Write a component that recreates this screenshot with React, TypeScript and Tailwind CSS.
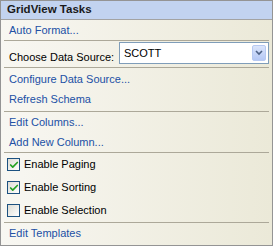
import { Check } from 'lucide-react';

const font = { fontFamily: '"Liberation Sans", Arial, sans-serif' };

function Sep() {
  return <div className="mx-[3px] h-px bg-[#aca899]" />;
}

function Link({ label, h = 'h-[20px]' }: { label: string; h?: string }) {
  return (
    <div className={`flex ${h} items-center pl-[8px] text-[11px] text-[#2150a5]`}>
      <span className="cursor-pointer hover:underline">{label}</span>
    </div>
  );
}

function CheckRow({ label, checked }: { label: string; checked: boolean }) {
  return (
    <div className="flex h-[23px] items-center gap-[4px] pl-[6px] text-[11px] text-black">
      <span className="flex h-[13px] w-[13px] items-center justify-center border border-[#1c5180] bg-gradient-to-br from-[#dcdcd5] to-white">
        {checked && <Check className="h-[10px] w-[10px] text-[#21a121]" strokeWidth={4} />}
      </span>
      <span>{label}</span>
    </div>
  );
}

export default function App() {
  return (
    <div
      className="flex h-[246px] w-[273px] flex-col border border-[#949494] bg-gradient-to-r from-[#f8f7f2] to-[#ebe9d8]"
      style={font}
    >
      <div className="flex h-[19px] shrink-0 items-center border-b border-[#a3a3a3] bg-[#c2d3f0] pl-[6px] text-[11.5px] font-bold text-[#1a1a1a]">
        GridView Tasks
      </div>

      <Link label="Auto Format..." />
      <Sep />

      <div className="flex h-[26px] items-start pt-[1px] pl-[8px] pr-[3px] text-[11px] text-black">
        <span className="mt-[7px] w-[110px]">Choose Data Source:</span>
        <div className="flex h-[22px] flex-1 items-center justify-between border border-[#7f9db9] bg-white pl-[4px] pr-[2px]">
          <span>SCOTT</span>
          <span className="flex h-[16px] w-[14px] items-center justify-center rounded-[2px] border border-[#b7c9f2] bg-gradient-to-b from-[#dbe5fb] to-[#b5c8f5]">
            <svg width="8" height="6" viewBox="0 0 8 6">
              <path d="M1 1 L4 4 L7 1" fill="none" stroke="#4d6185" strokeWidth="1.6" />
            </svg>
          </span>
        </div>
      </div>
      <Sep />

      <div className="pt-[1px] pb-[2px]">
        <Link label="Configure Data Source..." />
        <Link label="Refresh Schema" />
      </div>
      <Sep />

      <div>
        <Link label="Edit Columns..." />
        <Link label="Add New Column..." />
      </div>
      <Sep />

      <div>
        <CheckRow label="Enable Paging" checked />
        <CheckRow label="Enable Sorting" checked />
        <CheckRow label="Enable Selection" checked={false} />
      </div>
      <Sep />

      <Link label="Edit Templates" h="h-[21px]" />
    </div>
  );
}
